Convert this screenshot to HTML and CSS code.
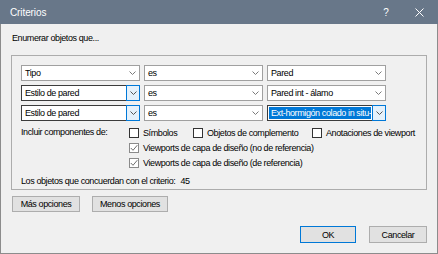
FILE: index.html
```html
<!DOCTYPE html>
<html>
<head>
<meta charset="utf-8">
<link rel="stylesheet" href="styles.css">
</head>
<body>
<div class="window">
  <div class="titlebar">
    <span class="title">Criterios</span>
    <span class="help">?</span>
    <span class="close"><svg width="9" height="9" viewBox="0 0 9 9"><path d="M0.5 0.5 L8.5 8.5 M8.5 0.5 L0.5 8.5" stroke="#ffffff" stroke-width="1" fill="none"/></svg></span>
  </div>
  <div class="body">
    <div class="intro">Enumerar objetos que...</div>
    <div class="group">
      <div class="criteria">
        <div class="combo"><span class="val">Tipo</span><span class="btn"><svg width="7" height="4" viewBox="0 0 7 4"><path d="M0.5 0.5 L3.5 3.5 L6.5 0.5" stroke="#7a7a7a" fill="none"/></svg></span></div>
        <div class="combo"><span class="val">es</span><span class="btn"><svg width="7" height="4" viewBox="0 0 7 4"><path d="M0.5 0.5 L3.5 3.5 L6.5 0.5" stroke="#7a7a7a" fill="none"/></svg></span></div>
        <div class="combo"><span class="val">Pared</span><span class="btn"><svg width="7" height="4" viewBox="0 0 7 4"><path d="M0.5 0.5 L3.5 3.5 L6.5 0.5" stroke="#7a7a7a" fill="none"/></svg></span></div>

        <div class="combo active"><span class="val">Estilo de pared</span><span class="btn"><svg width="7" height="4" viewBox="0 0 7 4"><path d="M0.5 0.5 L3.5 3.5 L6.5 0.5" stroke="#555" fill="none"/></svg></span></div>
        <div class="combo"><span class="val">es</span><span class="btn"><svg width="7" height="4" viewBox="0 0 7 4"><path d="M0.5 0.5 L3.5 3.5 L6.5 0.5" stroke="#7a7a7a" fill="none"/></svg></span></div>
        <div class="combo"><span class="val">Pared int - álamo</span><span class="btn"><svg width="7" height="4" viewBox="0 0 7 4"><path d="M0.5 0.5 L3.5 3.5 L6.5 0.5" stroke="#7a7a7a" fill="none"/></svg></span></div>

        <div class="combo active"><span class="val">Estilo de pared</span><span class="btn"><svg width="7" height="4" viewBox="0 0 7 4"><path d="M0.5 0.5 L3.5 3.5 L6.5 0.5" stroke="#555" fill="none"/></svg></span></div>
        <div class="combo"><span class="val">es</span><span class="btn"><svg width="7" height="4" viewBox="0 0 7 4"><path d="M0.5 0.5 L3.5 3.5 L6.5 0.5" stroke="#7a7a7a" fill="none"/></svg></span></div>
        <div class="combo active focus"><span class="val"><span class="sel">Ext-hormigón colado in situ-</span></span><span class="btn"><svg width="7" height="4" viewBox="0 0 7 4"><path d="M0.5 0.5 L3.5 3.5 L6.5 0.5" stroke="#555" fill="none"/></svg></span></div>
      </div>

      <div class="include">
        <div class="inc-label">Incluir componentes de:</div>
        <div class="inc-opts">
          <div class="opt-row">
            <label class="opt w1"><span class="box"></span>Símbolos</label>
            <label class="opt w2"><span class="box"></span>Objetos de complemento</label>
            <label class="opt"><span class="box"></span>Anotaciones de viewport</label>
          </div>
          <div class="opt-row">
            <label class="opt"><span class="box checked"><svg width="8" height="8" viewBox="0 0 8 8"><path d="M0.8 4 L3 6.3 L7.3 1.2" stroke="#6e6e6e" fill="none" stroke-width="1"/></svg></span>Viewports de capa de diseño (no de referencia)</label>
          </div>
          <div class="opt-row">
            <label class="opt"><span class="box checked"><svg width="8" height="8" viewBox="0 0 8 8"><path d="M0.8 4 L3 6.3 L7.3 1.2" stroke="#6e6e6e" fill="none" stroke-width="1"/></svg></span>Viewports de capa de diseño (de referencia)</label>
          </div>
        </div>
      </div>

      <div class="count">Los objetos que concuerdan con el criterio: <span class="num">45</span></div>
    </div>

    <div class="more">
      <button class="btn-std b-mas">Más opciones</button>
      <button class="btn-std b-menos">Menos opciones</button>
    </div>

    <div class="footer">
      <button class="btn-std b-ok">OK</button>
      <button class="btn-std b-cancel">Cancelar</button>
    </div>
  </div>
</div>
</body>
</html>
```
FILE: styles.css
```css
* { box-sizing: border-box; }
html, body { margin: 0; padding: 0; background: #f0f0f0; }
body {
  font-family: "Liberation Sans", Arial, sans-serif;
  font-size: 9px;
  letter-spacing: -0.4px;
  color: #000;
}
.window {
  width: 438px;
  height: 254px;
  display: flex;
  flex-direction: column;
  background: #f0f0f0;
}
.titlebar {
  height: 24px;
  background: #687789;
  display: flex;
  align-items: center;
  color: #fff;
  flex: none;
}
.title {
  font-size: 10px;
  letter-spacing: -0.1px;
  margin-left: 10px;
  flex: 1;
}
.help {
  font-size: 10px;
  letter-spacing: 0;
  width: 8px;
  margin-right: 25px;
  text-align: center;
}
.close {
  display: flex;
  margin-right: 14px;
}
.body {
  flex: 1;
  border: 1px solid #8c8c8c;
  border-top: none;
  padding: 0 10px;
  display: flex;
  flex-direction: column;
}
.intro {
  margin-top: 8px;
  margin-left: 1px;
  line-height: 12px;
  height: 12px;
}
.group {
  margin-top: 11px;
  border: 1px solid #acacac;
  padding: 9px 9px 2px 9px;
}
.criteria {
  display: grid;
  grid-template-columns: 119px 119px 119px;
  column-gap: 4px;
  row-gap: 4px;
}
.combo {
  height: 16px;
  background: #fff;
  border: 1px solid #a0a0a0;
  display: flex;
  align-items: stretch;
}
.combo .val {
  flex: 1;
  padding-left: 3px;
  line-height: 14px;
  white-space: nowrap;
  overflow: hidden;
}
.combo .btn {
  width: 13px;
  display: flex;
  align-items: center;
  justify-content: center;
}
.combo.active {
  border-color: #3c3c3c;
}
.combo.active .btn {
  background: #e5f1fb;
  border: 1px solid #0078d7;
  margin: -1px -1px -1px 0;
  width: 14px;
}
.combo.focus .val {
  padding: 1px;
}
.sel {
  display: block;
  background: #0078d7;
  color: #fff;
  line-height: 12px;
  padding-left: 2px;
  white-space: nowrap;
  overflow: hidden;
}
.include {
  margin-top: 4px;
  display: grid;
  grid-template-columns: 108px 1fr;
}
.inc-label {
  line-height: 15px;
}
.opt-row {
  display: flex;
  height: 15px;
  align-items: center;
}
.opt {
  display: flex;
  align-items: center;
  white-space: nowrap;
}
.opt.w1 { width: 64px; }
.opt.w2 { width: 119px; }
.box {
  width: 10px;
  height: 10px;
  border: 1px solid #333;
  background: #fff;
  margin-right: 4px;
  display: flex;
  align-items: center;
  justify-content: center;
  flex: none;
}
.box.checked {
  border-color: #8a8a8a;
}
.count {
  margin-top: 5px;
  line-height: 12px;
  height: 12px;
}
.count .num { margin-left: 3px; }
.more {
  margin-top: 6px;
  margin-left: 1px;
  display: flex;
  gap: 12px;
}
.btn-std {
  font-family: "Liberation Sans", Arial, sans-serif;
  font-size: 9px;
  letter-spacing: -0.4px;
  color: #000;
  background: #e1e1e1;
  border: 1px solid #adadad;
  padding: 0;
  margin: 0;
  height: 16px;
  line-height: 14px;
  text-align: center;
}
.b-mas { width: 68px; }
.b-menos { width: 76px; }
.footer {
  margin-top: 14px;
  display: flex;
  justify-content: flex-end;
  gap: 13px;
}
.b-ok, .b-cancel { height: 17px; }
.b-ok { width: 56px; border-color: #0078d7; }
.b-cancel { width: 58px; }
```
